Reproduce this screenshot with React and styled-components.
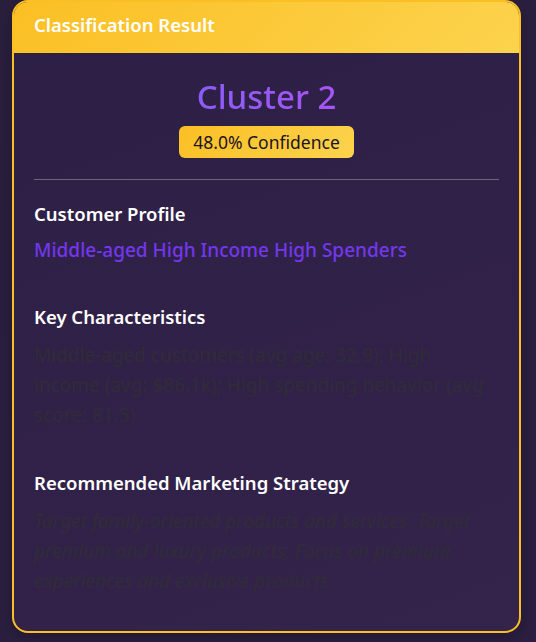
import React from "react";
import styled, { createGlobalStyle } from "styled-components";

const GlobalStyle = createGlobalStyle`
  html, body {
    margin: 0;
    padding: 0;
    background: #2a1f3d;
    font-family: "Noto Sans", "Open Sans", sans-serif;
  }
`;

const Page = styled.div`
  padding: 0 15px 8px 12px;
  min-height: 642px;
  box-sizing: border-box;
  background: linear-gradient(135deg, #2a1f3d 0%, #2c1f42 100%);
`;

const Card = styled.div`
  border: 2px solid #fbbf24;
  border-radius: 16px;
  overflow: hidden;
  background: linear-gradient(160deg, #2c1f44 0%, #34234b 100%);
  box-shadow: 0 4px 16px rgba(0, 0, 0, 0.25);
`;

const Header = styled.div`
  background: linear-gradient(135deg, #fbbf24 0%, #fcd34d 100%);
  padding: 10px 20px 12px;
  height: 51px;
  box-sizing: border-box;
  color: #fff;
  font-size: 18.5px;
  font-weight: 600;
  line-height: 26px;
`;

const Body = styled.div`
  padding: 24px 20px 35px;
`;

const Result = styled.div`
  display: flex;
  flex-direction: column;
  align-items: center;
`;

const ClusterName = styled.div`
  font-size: 33px;
  font-weight: 500;
  line-height: 40px;
  background: linear-gradient(90deg, #8b5cf6, #a855f7);
  -webkit-background-clip: text;
  background-clip: text;
  color: transparent;
`;

const Badge = styled.span`
  margin-top: 9px;
  padding: 4px 14px;
  border-radius: 6px;
  background: linear-gradient(135deg, #fbbf24 0%, #fcd34d 100%);
  color: #1a1423;
  font-size: 17.5px;
  line-height: 24px;
`;

const Divider = styled.hr`
  border: 0;
  height: 1px;
  background: rgba(255, 255, 255, 0.3);
  margin: 21px 0 22px;
`;

const Section = styled.section`
  & + & {
    margin-top: 41px;
  }
`;

const Label = styled.h3`
  margin: 0 0 11px;
  color: #fff;
  font-size: 18.5px;
  font-weight: 600;
  line-height: 24px;
`;

const Highlight = styled.div`
  color: #7337ec;
  font-size: 19px;
  font-weight: 500;
  line-height: 27px;
`;

const Text = styled.p`
  margin: 0;
  color: #302c38;
  font-size: 19px;
  line-height: 30px;
  font-style: ${(p) => (p.$italic ? "italic" : "normal")};
`;

export default function App() {
  return (
    <>
      <GlobalStyle />
      <Page>
        <Card>
          <Header>Classification Result</Header>
          <Body>
            <Result>
              <ClusterName>Cluster 2</ClusterName>
              <Badge>48.0% Confidence</Badge>
            </Result>
            <Divider />
            <Section>
              <Label>Customer Profile</Label>
              <Highlight>Middle-aged High Income High Spenders</Highlight>
            </Section>
            <Section>
              <Label>Key Characteristics</Label>
              <Text>
                Middle-aged customers (avg age: 32.9); High income (avg:
                $86.1k); High spending behavior (avg score: 81.5)
              </Text>
            </Section>
            <Section>
              <Label>Recommended Marketing Strategy</Label>
              <Text $italic>
                Target family-oriented products and services; Target premium
                and luxury products; Focus on premium experiences and
                exclusive products
              </Text>
            </Section>
          </Body>
        </Card>
      </Page>
    </>
  );
}
